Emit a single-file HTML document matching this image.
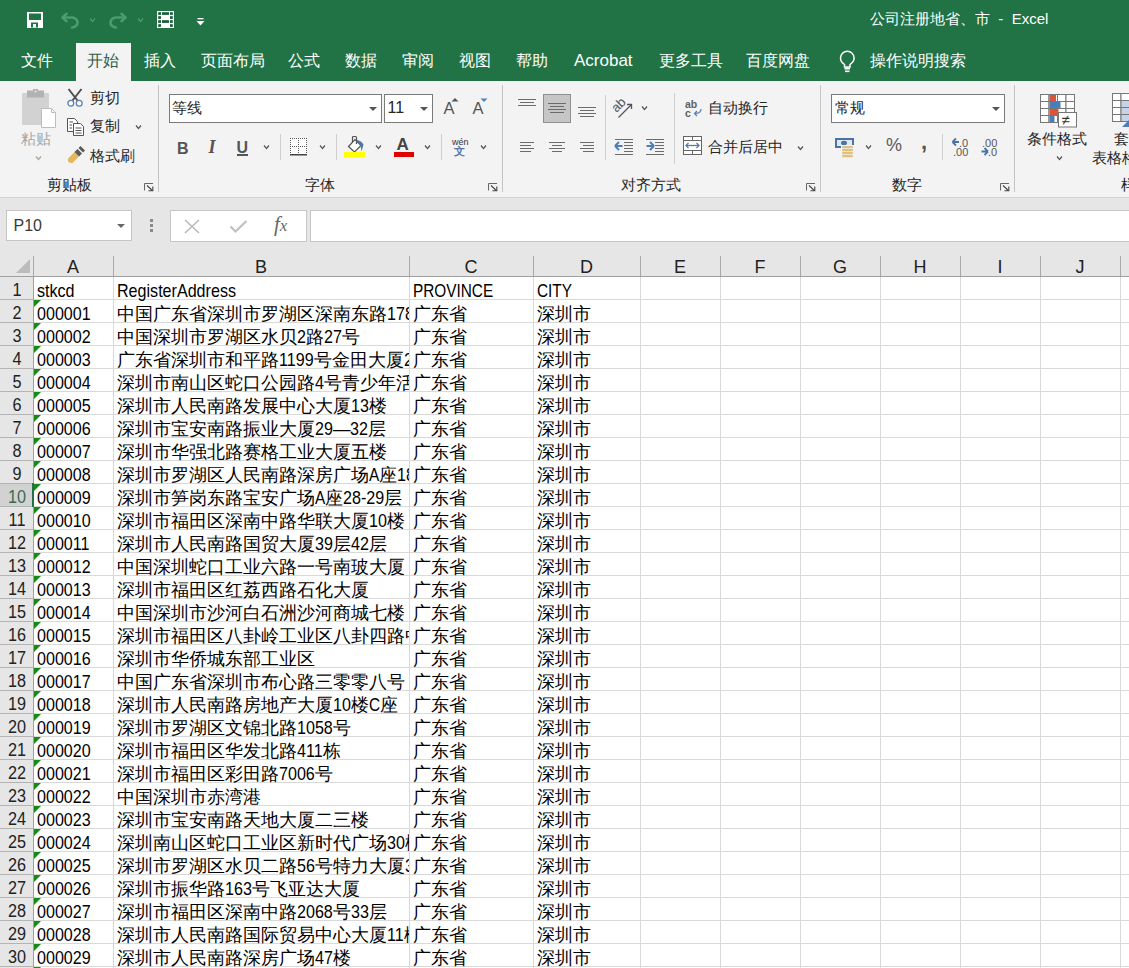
<!DOCTYPE html><html><head><meta charset="utf-8"><style>
html,body{margin:0;padding:0}
body{width:1129px;height:968px;overflow:hidden;position:relative;background:#fff;font-family:'Liberation Sans', sans-serif}
</style></head><body>
<div style="position:absolute;left:0px;top:0px;width:1129px;height:81px;background:#217346"></div>
<div style="position:absolute;left:76px;top:43px;width:55px;height:38px;background:#f3f3f3"></div>
<div style="position:absolute;left:870px;top:8.3px;height:21px;line-height:21px;font-size:15px;color:#ffffff;white-space:nowrap;">公司注册地省、市&nbsp; -&nbsp; Excel</div>
<div style="position:absolute;left:20.7px;top:50.1px;height:21px;line-height:21px;font-size:15.5px;color:#ffffff;white-space:nowrap;">文件</div>
<div style="position:absolute;left:86.7px;top:50.1px;height:21px;line-height:21px;font-size:15.5px;color:#30604a;white-space:nowrap;">开始</div>
<div style="position:absolute;left:143.7px;top:50.1px;height:21px;line-height:21px;font-size:15.5px;color:#ffffff;white-space:nowrap;">插入</div>
<div style="position:absolute;left:200.7px;top:50.1px;height:21px;line-height:21px;font-size:15.5px;color:#ffffff;white-space:nowrap;">页面布局</div>
<div style="position:absolute;left:287.7px;top:50.1px;height:21px;line-height:21px;font-size:15.5px;color:#ffffff;white-space:nowrap;">公式</div>
<div style="position:absolute;left:344.7px;top:50.1px;height:21px;line-height:21px;font-size:15.5px;color:#ffffff;white-space:nowrap;">数据</div>
<div style="position:absolute;left:401.7px;top:50.1px;height:21px;line-height:21px;font-size:15.5px;color:#ffffff;white-space:nowrap;">审阅</div>
<div style="position:absolute;left:458.7px;top:50.1px;height:21px;line-height:21px;font-size:15.5px;color:#ffffff;white-space:nowrap;">视图</div>
<div style="position:absolute;left:515.7px;top:50.1px;height:21px;line-height:21px;font-size:15.5px;color:#ffffff;white-space:nowrap;">帮助</div>
<div style="position:absolute;left:574px;top:48.6px;height:23px;line-height:23px;font-size:17px;color:#ffffff;white-space:nowrap;">Acrobat</div>
<div style="position:absolute;left:658.7px;top:50.1px;height:21px;line-height:21px;font-size:15.5px;color:#ffffff;white-space:nowrap;">更多工具</div>
<div style="position:absolute;left:745.7px;top:50.1px;height:21px;line-height:21px;font-size:15.5px;color:#ffffff;white-space:nowrap;">百度网盘</div>
<div style="position:absolute;left:869.7px;top:50.1px;height:21px;line-height:21px;font-size:15.5px;color:#ffffff;white-space:nowrap;">操作说明搜索</div>
<svg style="position:absolute;left:26px;top:11px;" width="18" height="18" viewBox="0 0 18 18"><rect x="1" y="1" width="16" height="16" fill="#fff"/><rect x="3" y="2.5" width="12" height="6.5" fill="#217346"/><rect x="5" y="11.5" width="7" height="5" fill="#217346"/><rect x="7" y="13" width="3" height="3.5" fill="#fff"/></svg>
<svg style="position:absolute;left:58px;top:10px;" width="24" height="20" viewBox="0 0 24 20"><path d="M5,7.5 H13 A6,5 0 0 1 14,17.5" fill="none" stroke="#4c9a6d" stroke-width="2.6" stroke-linecap="round"/><polyline points="8.5,3.8 4.5,7.5 8.5,11.2" fill="none" stroke="#4c9a6d" stroke-width="2.6" stroke-linecap="round" stroke-linejoin="round"/></svg>
<svg style="position:absolute;left:88.5px;top:16.5px;" width="7" height="6" viewBox="0 0 7 6"><polyline points="1,1.5 3.5,4.5 6,1.5" fill="none" stroke="#4f9a70" stroke-width="1.2"/></svg>
<svg style="position:absolute;left:106px;top:10px;" width="24" height="20" viewBox="0 0 24 20"><path d="M19,7.5 H11 A6,5 0 0 0 10,17.5" fill="none" stroke="#4c9a6d" stroke-width="2.6" stroke-linecap="round"/><polyline points="15.5,3.8 19.5,7.5 15.5,11.2" fill="none" stroke="#4c9a6d" stroke-width="2.6" stroke-linecap="round" stroke-linejoin="round"/></svg>
<svg style="position:absolute;left:136.5px;top:16.5px;" width="7" height="6" viewBox="0 0 7 6"><polyline points="1,1.5 3.5,4.5 6,1.5" fill="none" stroke="#4f9a70" stroke-width="1.2"/></svg>
<svg style="position:absolute;left:157px;top:11px;" width="17" height="17" viewBox="0 0 17 17"><rect x="0" y="0" width="17" height="17" fill="#fff"/><rect x="1.2" y="1.2" width="2.8" height="2.7" fill="#1c5b38"/><rect x="13" y="1.2" width="2.8" height="2.7" fill="#1c5b38"/><rect x="1.2" y="5.2" width="2.8" height="2.7" fill="#1c5b38"/><rect x="13" y="5.2" width="2.8" height="2.7" fill="#1c5b38"/><rect x="1.2" y="9.2" width="2.8" height="2.7" fill="#1c5b38"/><rect x="13" y="9.2" width="2.8" height="2.7" fill="#1c5b38"/><rect x="1.2" y="13.2" width="2.8" height="2.7" fill="#1c5b38"/><rect x="13" y="13.2" width="2.8" height="2.7" fill="#1c5b38"/><rect x="5" y="1.2" width="7" height="2.7" fill="#1c5b38"/><rect x="5" y="9.2" width="7" height="2.7" fill="#1c5b38"/></svg>
<svg style="position:absolute;left:196px;top:17px;" width="9" height="10" viewBox="0 0 9 10"><rect x="1.5" y="1" width="6" height="1.3" fill="#fff"/><polygon points="0.5,4 8.5,4 4.5,8.5" fill="#fff"/></svg>
<svg style="position:absolute;left:838px;top:50px;" width="19" height="24" viewBox="0 0 19 24"><path d="M6.5,17 V14.5 C3.5,12.5 2.5,10.5 2.5,8 A6.8,6.8 0 0 1 16.1,8 C16.1,10.5 15,12.5 12,14.5 V17 Z" fill="none" stroke="#fff" stroke-width="1.5"/><rect x="6.5" y="17.5" width="5.5" height="2" fill="#fff"/><rect x="7" y="20.5" width="4.5" height="1.6" fill="#fff"/></svg>
<div style="position:absolute;left:0px;top:81px;width:1129px;height:116px;background:#f3f3f3"></div>
<div style="position:absolute;left:0px;top:197px;width:1129px;height:1px;background:#d4d4d4"></div>
<div style="position:absolute;left:158px;top:85px;width:1px;height:107px;background:#c4c4c4"></div>
<div style="position:absolute;left:502px;top:85px;width:1px;height:107px;background:#c4c4c4"></div>
<div style="position:absolute;left:820px;top:85px;width:1px;height:107px;background:#c4c4c4"></div>
<div style="position:absolute;left:1014px;top:85px;width:1px;height:107px;background:#c4c4c4"></div>
<svg style="position:absolute;left:20px;top:88px;" width="40" height="42" viewBox="0 0 40 42"><rect x="2" y="5" width="27" height="32" rx="1" fill="#d2d2d2"/><rect x="7" y="2.5" width="17" height="7" fill="#b2b2b2"/><rect x="13" y="1" width="5" height="4" fill="#b2b2b2"/><rect x="14.5" y="2.5" width="2" height="2" fill="#e0e0e0"/><path d="M21.5,20.5 H31.5 L35.5,24.5 V39.5 H21.5 Z" fill="#ffffff" stroke="#bdbdbd" stroke-width="1"/><path d="M31.5,20.5 V24.5 H35.5" fill="none" stroke="#bdbdbd" stroke-width="1"/></svg>
<div style="position:absolute;left:20.5px;top:127.8px;height:21px;line-height:21px;font-size:15px;color:#a6a6a6;white-space:nowrap;">粘贴</div>
<svg style="position:absolute;left:34.5px;top:155px;" width="7" height="6" viewBox="0 0 7 6"><polyline points="1,1.5 3.5,4.5 6,1.5" fill="none" stroke="#a6a6a6" stroke-width="1.2"/></svg>
<svg style="position:absolute;left:66px;top:88px;" width="19" height="20" viewBox="0 0 19 20"><path d="M2.5,1 L11.5,12.5 M15.5,1 L6.5,12.5" fill="none" stroke="#505050" stroke-width="2"/><circle cx="4.8" cy="15.3" r="2.9" fill="#fff" stroke="#5b7fa8" stroke-width="1.3"/><circle cx="13.2" cy="15.3" r="2.9" fill="#fff" stroke="#5b7fa8" stroke-width="1.3"/></svg>
<div style="position:absolute;left:90px;top:87.3px;height:21px;line-height:21px;font-size:15px;color:#262626;white-space:nowrap;">剪切</div>
<svg style="position:absolute;left:66px;top:117px;" width="20" height="20" viewBox="0 0 20 20"><path d="M1.5,1.5 H8.5 L11.5,4.5 V14.5 H1.5 Z" fill="#fff" stroke="#555" stroke-width="1"/><path d="M7.5,6.5 H14.5 L17.5,9.5 V18.5 H7.5 Z" fill="#fff" stroke="#555" stroke-width="1"/><line x1="3.5" y1="5" x2="7" y2="5" stroke="#555"/><line x1="3.5" y1="8" x2="6" y2="8" stroke="#555"/><line x1="3.5" y1="11" x2="6" y2="11" stroke="#555"/><line x1="9.5" y1="11" x2="15.5" y2="11" stroke="#555"/><line x1="9.5" y1="13.5" x2="15.5" y2="13.5" stroke="#555"/><line x1="9.5" y1="16" x2="15.5" y2="16" stroke="#555"/></svg>
<div style="position:absolute;left:90px;top:115.3px;height:21px;line-height:21px;font-size:15px;color:#262626;white-space:nowrap;">复制</div>
<svg style="position:absolute;left:134.5px;top:124px;" width="7" height="6" viewBox="0 0 7 6"><polyline points="1,1.5 3.5,4.5 6,1.5" fill="none" stroke="#555" stroke-width="1.2"/></svg>
<svg style="position:absolute;left:66px;top:146px;" width="20" height="20" viewBox="0 0 20 20"><path d="M2,12.5 L8.5,6 L13,10.5 L6.5,17 Q4,17.5 2,15.5 Z" fill="#e2b961"/><path d="M8.5,6 L11.5,3 L16,7.5 L13,10.5 Z" fill="#5a5a5a"/><path d="M12.5,2 L14.5,0 L19,4.5 L17,6.5 Z" fill="#5a5a5a"/></svg>
<div style="position:absolute;left:90px;top:144.8px;height:21px;line-height:21px;font-size:15px;color:#262626;white-space:nowrap;">格式刷</div>
<div style="position:absolute;left:47px;top:174.3px;height:21px;line-height:21px;font-size:15px;color:#262626;white-space:nowrap;">剪贴板</div>
<svg style="position:absolute;left:144px;top:183px;" width="10" height="9" viewBox="0 0 10 9"><polyline points="0.5,7.5 0.5,0.5 9,0.5" fill="none" stroke="#666" stroke-width="1"/><line x1="3" y1="2.5" x2="8.3" y2="7.5" stroke="#444" stroke-width="1.1"/><polyline points="4.5,7.8 8.8,7.8 8.8,3.5" fill="none" stroke="#444" stroke-width="1.1"/></svg>
<div style="position:absolute;left:169px;top:94px;width:213px;height:29px;background:#fff;border:1px solid #7a7a7a;box-sizing:border-box"></div>
<div style="position:absolute;left:172px;top:96.8px;height:21px;line-height:21px;font-size:15px;color:#262626;white-space:nowrap;">等线</div>
<svg style="position:absolute;left:368px;top:105.5px;" width="10" height="6" viewBox="0 0 10 6"><polygon points="1,1 9,1 5,5" fill="#555"/></svg>
<div style="position:absolute;left:384px;top:94px;width:49px;height:29px;background:#fff;border:1px solid #7a7a7a;box-sizing:border-box"></div>
<div style="position:absolute;left:387.5px;top:96.8px;height:22px;line-height:22px;font-size:16px;color:#262626;white-space:nowrap;">11</div>
<svg style="position:absolute;left:419px;top:105.5px;" width="10" height="6" viewBox="0 0 10 6"><polygon points="1,1 9,1 5,5" fill="#555"/></svg>
<div style="position:absolute;left:443.5px;top:96.8px;height:23px;line-height:23px;font-size:16.5px;color:#555;white-space:nowrap;">A</div>
<svg style="position:absolute;left:451px;top:97px;" width="8" height="5" viewBox="0 0 8 5"><polygon points="0.5,4.5 4,1 7.5,4.5" fill="#555"/></svg>
<div style="position:absolute;left:472.5px;top:96.8px;height:23px;line-height:23px;font-size:16.5px;color:#555;white-space:nowrap;">A</div>
<svg style="position:absolute;left:480px;top:98px;" width="8" height="5" viewBox="0 0 8 5"><polygon points="0.5,0.5 7.5,0.5 4,4" fill="#4a84c4"/></svg>
<div style="position:absolute;left:177px;top:137.8px;height:22px;line-height:22px;font-size:16px;color:#555;white-space:nowrap;font-weight:bold">B</div>
<div style="position:absolute;left:208.5px;top:135.3px;height:25px;line-height:25px;font-size:18px;color:#555;white-space:nowrap;font-weight:bold;font-style:italic;font-family:'Liberation Serif',serif">I</div>
<div style="position:absolute;left:236.5px;top:137.3px;height:22px;line-height:22px;font-size:16px;color:#555;white-space:nowrap;font-weight:bold">U</div>
<div style="position:absolute;left:237px;top:154px;width:11px;height:1.5px;background:#555"></div>
<svg style="position:absolute;left:262.5px;top:144px;" width="7" height="6" viewBox="0 0 7 6"><polyline points="1,1.5 3.5,4.5 6,1.5" fill="none" stroke="#555" stroke-width="1.2"/></svg>
<div style="position:absolute;left:280px;top:134px;width:1px;height:26px;background:#cfcfcf"></div>
<svg style="position:absolute;left:289px;top:137px;" width="19" height="19" viewBox="0 0 19 19"><rect x="1" y="1" width="17" height="16" fill="#fff"/><rect x="1" y="1" width="1" height="1" fill="#555"/><rect x="9" y="1" width="1" height="1" fill="#555"/><rect x="17" y="1" width="1" height="1" fill="#555"/><rect x="1" y="3" width="1" height="1" fill="#555"/><rect x="9" y="3" width="1" height="1" fill="#555"/><rect x="17" y="3" width="1" height="1" fill="#555"/><rect x="1" y="5" width="1" height="1" fill="#555"/><rect x="9" y="5" width="1" height="1" fill="#555"/><rect x="17" y="5" width="1" height="1" fill="#555"/><rect x="1" y="7" width="1" height="1" fill="#555"/><rect x="9" y="7" width="1" height="1" fill="#555"/><rect x="17" y="7" width="1" height="1" fill="#555"/><rect x="1" y="9" width="1" height="1" fill="#555"/><rect x="9" y="9" width="1" height="1" fill="#555"/><rect x="17" y="9" width="1" height="1" fill="#555"/><rect x="1" y="11" width="1" height="1" fill="#555"/><rect x="9" y="11" width="1" height="1" fill="#555"/><rect x="17" y="11" width="1" height="1" fill="#555"/><rect x="1" y="13" width="1" height="1" fill="#555"/><rect x="9" y="13" width="1" height="1" fill="#555"/><rect x="17" y="13" width="1" height="1" fill="#555"/><rect x="1" y="15" width="1" height="1" fill="#555"/><rect x="9" y="15" width="1" height="1" fill="#555"/><rect x="17" y="15" width="1" height="1" fill="#555"/><rect x="1" y="1" width="1" height="1" fill="#555"/><rect x="1" y="9" width="1" height="1" fill="#555"/><rect x="3" y="1" width="1" height="1" fill="#555"/><rect x="3" y="9" width="1" height="1" fill="#555"/><rect x="5" y="1" width="1" height="1" fill="#555"/><rect x="5" y="9" width="1" height="1" fill="#555"/><rect x="7" y="1" width="1" height="1" fill="#555"/><rect x="7" y="9" width="1" height="1" fill="#555"/><rect x="9" y="1" width="1" height="1" fill="#555"/><rect x="9" y="9" width="1" height="1" fill="#555"/><rect x="11" y="1" width="1" height="1" fill="#555"/><rect x="11" y="9" width="1" height="1" fill="#555"/><rect x="13" y="1" width="1" height="1" fill="#555"/><rect x="13" y="9" width="1" height="1" fill="#555"/><rect x="15" y="1" width="1" height="1" fill="#555"/><rect x="15" y="9" width="1" height="1" fill="#555"/><rect x="17" y="1" width="1" height="1" fill="#555"/><rect x="17" y="9" width="1" height="1" fill="#555"/><rect x="1" y="17" width="17" height="1.5" fill="#444"/></svg>
<svg style="position:absolute;left:318.5px;top:144px;" width="7" height="6" viewBox="0 0 7 6"><polyline points="1,1.5 3.5,4.5 6,1.5" fill="none" stroke="#555" stroke-width="1.2"/></svg>
<div style="position:absolute;left:336px;top:134px;width:1px;height:26px;background:#cfcfcf"></div>
<svg style="position:absolute;left:344px;top:135px;" width="22" height="23" viewBox="0 0 22 23"><path d="M4.5,11.5 L10.5,17 L17,10.5 L11,4.5 Z" fill="#fff" stroke="#555" stroke-width="1.2"/><path d="M8.5,7 V2.5 Q8.5,1.5 9.5,1.5 H11.5 Q12.5,1.5 12.5,2.5 V9" fill="none" stroke="#555" stroke-width="1.2"/><path d="M12,4.5 Q18,6 19.5,9.5 L17.5,16.5 L16.5,10.5 Z" fill="#4f78a6"/><rect x="0" y="17" width="21" height="5.5" fill="#ffff00"/></svg>
<svg style="position:absolute;left:374.5px;top:144px;" width="7" height="6" viewBox="0 0 7 6"><polyline points="1,1.5 3.5,4.5 6,1.5" fill="none" stroke="#555" stroke-width="1.2"/></svg>
<div style="position:absolute;left:396.5px;top:132.8px;height:23px;line-height:23px;font-size:17px;color:#444;white-space:nowrap;font-weight:bold">A</div>
<div style="position:absolute;left:394px;top:152px;width:20px;height:5px;background:#e00000"></div>
<svg style="position:absolute;left:423.5px;top:144px;" width="7" height="6" viewBox="0 0 7 6"><polyline points="1,1.5 3.5,4.5 6,1.5" fill="none" stroke="#555" stroke-width="1.2"/></svg>
<div style="position:absolute;left:441px;top:134px;width:1px;height:26px;background:#cfcfcf"></div>
<div style="position:absolute;left:452px;top:137.3px;height:10px;line-height:10px;font-size:9px;color:#333;white-space:nowrap;">wén</div>
<div style="position:absolute;left:453.5px;top:145.3px;height:12px;line-height:12px;font-size:11px;color:#4f78a6;white-space:nowrap;font-weight:bold">文</div>
<svg style="position:absolute;left:479.5px;top:144px;" width="7" height="6" viewBox="0 0 7 6"><polyline points="1,1.5 3.5,4.5 6,1.5" fill="none" stroke="#555" stroke-width="1.2"/></svg>
<div style="position:absolute;left:305px;top:174.3px;height:21px;line-height:21px;font-size:15px;color:#262626;white-space:nowrap;">字体</div>
<svg style="position:absolute;left:488px;top:183px;" width="10" height="9" viewBox="0 0 10 9"><polyline points="0.5,7.5 0.5,0.5 9,0.5" fill="none" stroke="#666" stroke-width="1"/><line x1="3" y1="2.5" x2="8.3" y2="7.5" stroke="#444" stroke-width="1.1"/><polyline points="4.5,7.8 8.8,7.8 8.8,3.5" fill="none" stroke="#444" stroke-width="1.1"/></svg>
<svg style="position:absolute;left:500px;top:90px;" width="170" height="80" viewBox="0 0 170 80"></svg>
<div style="position:absolute;left:518px;top:99px;width:18px;height:1px;background:#6b6b6b"></div>
<div style="position:absolute;left:520px;top:102px;width:14px;height:1px;background:#6b6b6b"></div>
<div style="position:absolute;left:518px;top:105px;width:18px;height:1px;background:#6b6b6b"></div>
<div style="position:absolute;left:543px;top:94px;width:28px;height:29px;background:#c6c6c6;border:1px solid #8f8f8f;box-sizing:border-box"></div>
<div style="position:absolute;left:548px;top:103px;width:18px;height:1px;background:#6b6b6b"></div>
<div style="position:absolute;left:550px;top:106px;width:14px;height:1px;background:#6b6b6b"></div>
<div style="position:absolute;left:548px;top:109px;width:18px;height:1px;background:#6b6b6b"></div>
<div style="position:absolute;left:550px;top:112px;width:14px;height:1px;background:#6b6b6b"></div>
<div style="position:absolute;left:578px;top:107px;width:18px;height:1px;background:#6b6b6b"></div>
<div style="position:absolute;left:580px;top:110px;width:14px;height:1px;background:#6b6b6b"></div>
<div style="position:absolute;left:578px;top:113px;width:18px;height:1px;background:#6b6b6b"></div>
<div style="position:absolute;left:580px;top:116px;width:14px;height:1px;background:#6b6b6b"></div>
<div style="position:absolute;left:520px;top:142px;width:14px;height:1px;background:#6b6b6b"></div>
<div style="position:absolute;left:549px;top:142px;width:16px;height:1px;background:#6b6b6b"></div>
<div style="position:absolute;left:580px;top:142px;width:14px;height:1px;background:#6b6b6b"></div>
<div style="position:absolute;left:520px;top:145px;width:11px;height:1px;background:#6b6b6b"></div>
<div style="position:absolute;left:552px;top:145px;width:10px;height:1px;background:#6b6b6b"></div>
<div style="position:absolute;left:583px;top:145px;width:11px;height:1px;background:#6b6b6b"></div>
<div style="position:absolute;left:520px;top:148px;width:14px;height:1px;background:#6b6b6b"></div>
<div style="position:absolute;left:549px;top:148px;width:16px;height:1px;background:#6b6b6b"></div>
<div style="position:absolute;left:580px;top:148px;width:14px;height:1px;background:#6b6b6b"></div>
<div style="position:absolute;left:520px;top:151px;width:11px;height:1px;background:#6b6b6b"></div>
<div style="position:absolute;left:552px;top:151px;width:10px;height:1px;background:#6b6b6b"></div>
<div style="position:absolute;left:583px;top:151px;width:11px;height:1px;background:#6b6b6b"></div>
<div style="position:absolute;left:605px;top:95px;width:1px;height:65px;background:#d0d0d0"></div>
<svg style="position:absolute;left:613px;top:97px;" width="22" height="22" viewBox="0 0 22 22"><text x="0" y="0" font-size="13" fill="#555" font-family="Liberation Sans" transform="translate(3.5,16) rotate(-45)">ab</text><line x1="5.5" y1="20.5" x2="18.5" y2="7.5" stroke="#555" stroke-width="1.3"/><polyline points="14,7.5 18.5,7.5 18.5,12" fill="none" stroke="#555" stroke-width="1.3"/></svg>
<svg style="position:absolute;left:640.5px;top:105px;" width="7" height="6" viewBox="0 0 7 6"><polyline points="1,1.5 3.5,4.5 6,1.5" fill="none" stroke="#555" stroke-width="1.2"/></svg>
<div style="position:absolute;left:615px;top:139px;width:18px;height:1px;background:#6b6b6b"></div>
<div style="position:absolute;left:624px;top:142px;width:9px;height:1px;background:#6b6b6b"></div>
<div style="position:absolute;left:624px;top:145px;width:9px;height:1px;background:#6b6b6b"></div>
<div style="position:absolute;left:624px;top:148px;width:9px;height:1px;background:#6b6b6b"></div>
<div style="position:absolute;left:624px;top:151px;width:9px;height:1px;background:#6b6b6b"></div>
<div style="position:absolute;left:615px;top:154px;width:18px;height:1px;background:#6b6b6b"></div>
<svg style="position:absolute;left:614px;top:140px;" width="10" height="12" viewBox="0 0 10 12"><path d="M1,6 L5,2 M1,6 L5,10 M1.5,6 H8.5" fill="none" stroke="#4a7ebb" stroke-width="2"/></svg>
<div style="position:absolute;left:646px;top:139px;width:18px;height:1px;background:#6b6b6b"></div>
<div style="position:absolute;left:655px;top:142px;width:9px;height:1px;background:#6b6b6b"></div>
<div style="position:absolute;left:655px;top:145px;width:9px;height:1px;background:#6b6b6b"></div>
<div style="position:absolute;left:655px;top:148px;width:9px;height:1px;background:#6b6b6b"></div>
<div style="position:absolute;left:655px;top:151px;width:9px;height:1px;background:#6b6b6b"></div>
<div style="position:absolute;left:646px;top:154px;width:18px;height:1px;background:#6b6b6b"></div>
<svg style="position:absolute;left:645px;top:140px;" width="10" height="12" viewBox="0 0 10 12"><path d="M9,6 L5,2 M9,6 L5,10 M1.5,6 H8.5" fill="none" stroke="#4a7ebb" stroke-width="2"/></svg>
<div style="position:absolute;left:674px;top:93px;width:1px;height:71px;background:#d0d0d0"></div>
<svg style="position:absolute;left:684px;top:99px;" width="19" height="19" viewBox="0 0 19 19"><text x="1" y="8.5" font-size="10.5" font-weight="bold" fill="#606060" font-family="Liberation Sans">ab</text><text x="1" y="17.5" font-size="10.5" font-weight="bold" fill="#606060" font-family="Liberation Sans">c</text><path d="M17,10 Q17,14.5 11,14.5" fill="none" stroke="#5a84b8" stroke-width="1.3"/><polyline points="13,12 10.5,14.5 13,17" fill="none" stroke="#5a84b8" stroke-width="1.3"/></svg>
<div style="position:absolute;left:708px;top:96.8px;height:21px;line-height:21px;font-size:15px;color:#262626;white-space:nowrap;">自动换行</div>
<svg style="position:absolute;left:683px;top:136px;" width="20" height="20" viewBox="0 0 20 20"><rect x="0.5" y="0.5" width="18" height="18" fill="#fff" stroke="#666" stroke-width="1"/><line x1="0.5" y1="4.5" x2="18.5" y2="4.5" stroke="#666"/><line x1="0.5" y1="14.5" x2="18.5" y2="14.5" stroke="#666"/><line x1="9.5" y1="0.5" x2="9.5" y2="4.5" stroke="#666"/><line x1="9.5" y1="14.5" x2="9.5" y2="18.5" stroke="#666"/><line x1="3" y1="9.5" x2="16" y2="9.5" stroke="#5a7aa8" stroke-width="1.3"/><polyline points="5.5,7 3,9.5 5.5,12" fill="none" stroke="#5a7aa8" stroke-width="1.3"/><polyline points="13.5,7 16,9.5 13.5,12" fill="none" stroke="#5a7aa8" stroke-width="1.3"/></svg>
<div style="position:absolute;left:708px;top:136.3px;height:21px;line-height:21px;font-size:15px;color:#262626;white-space:nowrap;">合并后居中</div>
<svg style="position:absolute;left:796.5px;top:144.5px;" width="7" height="6" viewBox="0 0 7 6"><polyline points="1,1.5 3.5,4.5 6,1.5" fill="none" stroke="#555" stroke-width="1.2"/></svg>
<div style="position:absolute;left:621px;top:174.3px;height:21px;line-height:21px;font-size:15px;color:#262626;white-space:nowrap;">对齐方式</div>
<svg style="position:absolute;left:806px;top:183px;" width="10" height="9" viewBox="0 0 10 9"><polyline points="0.5,7.5 0.5,0.5 9,0.5" fill="none" stroke="#666" stroke-width="1"/><line x1="3" y1="2.5" x2="8.3" y2="7.5" stroke="#444" stroke-width="1.1"/><polyline points="4.5,7.8 8.8,7.8 8.8,3.5" fill="none" stroke="#444" stroke-width="1.1"/></svg>
<div style="position:absolute;left:831px;top:94px;width:174px;height:29px;background:#fff;border:1px solid #7a7a7a;box-sizing:border-box"></div>
<div style="position:absolute;left:835px;top:96.8px;height:21px;line-height:21px;font-size:15px;color:#262626;white-space:nowrap;">常规</div>
<svg style="position:absolute;left:991px;top:105.5px;" width="10" height="6" viewBox="0 0 10 6"><polygon points="1,1 9,1 5,5" fill="#555"/></svg>
<svg style="position:absolute;left:834px;top:137px;" width="22" height="21" viewBox="0 0 22 21"><rect x="1" y="1" width="19" height="10" fill="#4a74a8"/><rect x="3" y="3" width="15" height="6" fill="#dfe8f3"/><ellipse cx="10" cy="6" rx="3" ry="2.2" fill="#4a74a8"/><rect x="7" y="8" width="13" height="12.5" fill="#f3f3f3"/><rect x="8" y="9" width="11" height="2.3" rx="1" fill="#e3c07a"/><rect x="8" y="12" width="11" height="2.3" rx="1" fill="#e3c07a"/><rect x="8" y="15" width="11" height="2.3" rx="1" fill="#e3c07a"/><rect x="8" y="18" width="11" height="2.3" rx="1" fill="#e3c07a"/></svg>
<svg style="position:absolute;left:864.5px;top:144px;" width="7" height="6" viewBox="0 0 7 6"><polyline points="1,1.5 3.5,4.5 6,1.5" fill="none" stroke="#555" stroke-width="1.2"/></svg>
<div style="position:absolute;left:886px;top:133.3px;height:25px;line-height:25px;font-size:18px;color:#5a5a5a;white-space:nowrap;">%</div>
<div style="position:absolute;left:921px;top:126.8px;height:30px;line-height:30px;font-size:22px;color:#555;white-space:nowrap;"><b>,</b></div>
<div style="position:absolute;left:942px;top:134px;width:1px;height:26px;background:#d0d0d0"></div>
<svg style="position:absolute;left:951px;top:137px;" width="20" height="20" viewBox="0 0 20 20"><path d="M1.5,5 L5,1.5 M1.5,5 L5,8.5 M2,5 H8" fill="none" stroke="#4a74a8" stroke-width="1.8"/><text x="8" y="9.5" font-size="11" fill="#555" font-family="Liberation Sans">.0</text><text x="2" y="19" font-size="11" fill="#555" font-family="Liberation Sans">.00</text></svg>
<svg style="position:absolute;left:980px;top:137px;" width="20" height="20" viewBox="0 0 20 20"><text x="2" y="9.5" font-size="11" fill="#555" font-family="Liberation Sans">.00</text><path d="M8,14.5 L4.5,11 M8,14.5 L4.5,18 M1.5,14.5 H7.5" fill="none" stroke="#4a74a8" stroke-width="1.8"/><text x="8" y="19" font-size="11" fill="#555" font-family="Liberation Sans">.0</text></svg>
<div style="position:absolute;left:892px;top:173.8px;height:21px;line-height:21px;font-size:15px;color:#262626;white-space:nowrap;">数字</div>
<svg style="position:absolute;left:1000px;top:183px;" width="10" height="9" viewBox="0 0 10 9"><polyline points="0.5,7.5 0.5,0.5 9,0.5" fill="none" stroke="#666" stroke-width="1"/><line x1="3" y1="2.5" x2="8.3" y2="7.5" stroke="#444" stroke-width="1.1"/><polyline points="4.5,7.8 8.8,7.8 8.8,3.5" fill="none" stroke="#444" stroke-width="1.1"/></svg>
<svg style="position:absolute;left:1040px;top:94px;" width="38" height="34" viewBox="0 0 38 34"><rect x="0.5" y="0.5" width="8.5" height="7" fill="#fff" stroke="#777" stroke-width="1"/><rect x="9.0" y="0.5" width="8.5" height="7" fill="#fff" stroke="#777" stroke-width="1"/><rect x="17.5" y="0.5" width="8.5" height="7" fill="#fff" stroke="#777" stroke-width="1"/><rect x="26.0" y="0.5" width="8.5" height="7" fill="#fff" stroke="#777" stroke-width="1"/><rect x="0.5" y="7.5" width="8.5" height="7" fill="#fff" stroke="#777" stroke-width="1"/><rect x="9.0" y="7.5" width="8.5" height="7" fill="#fff" stroke="#777" stroke-width="1"/><rect x="17.5" y="7.5" width="8.5" height="7" fill="#fff" stroke="#777" stroke-width="1"/><rect x="26.0" y="7.5" width="8.5" height="7" fill="#fff" stroke="#777" stroke-width="1"/><rect x="0.5" y="14.5" width="8.5" height="7" fill="#fff" stroke="#777" stroke-width="1"/><rect x="9.0" y="14.5" width="8.5" height="7" fill="#fff" stroke="#777" stroke-width="1"/><rect x="17.5" y="14.5" width="8.5" height="7" fill="#fff" stroke="#777" stroke-width="1"/><rect x="26.0" y="14.5" width="8.5" height="7" fill="#fff" stroke="#777" stroke-width="1"/><rect x="0.5" y="21.5" width="8.5" height="7" fill="#fff" stroke="#777" stroke-width="1"/><rect x="9.0" y="21.5" width="8.5" height="7" fill="#fff" stroke="#777" stroke-width="1"/><rect x="17.5" y="21.5" width="8.5" height="7" fill="#fff" stroke="#777" stroke-width="1"/><rect x="26.0" y="21.5" width="8.5" height="7" fill="#fff" stroke="#777" stroke-width="1"/><rect x="9.5" y="1" width="6.5" height="6" fill="#d8553a"/><rect x="9.5" y="8" width="11" height="6" fill="#4a7ebb"/><rect x="9.5" y="15" width="9" height="6" fill="#d8553a"/><rect x="9.5" y="22" width="5" height="6" fill="#4a7ebb"/><rect x="18.5" y="18.5" width="18" height="14.5" fill="#fff" stroke="#777" stroke-width="1"/><text x="21.5" y="31" font-size="15" fill="#333" font-family="Liberation Sans">≠</text></svg>
<div style="position:absolute;left:1027px;top:127.8px;height:21px;line-height:21px;font-size:15px;color:#262626;white-space:nowrap;">条件格式</div>
<svg style="position:absolute;left:1055.5px;top:155px;" width="7" height="6" viewBox="0 0 7 6"><polyline points="1,1.5 3.5,4.5 6,1.5" fill="none" stroke="#555" stroke-width="1.2"/></svg>
<svg style="position:absolute;left:1112px;top:93px;" width="20" height="37" viewBox="0 0 20 37"><rect x="0.5" y="0.5" width="8.5" height="7" fill="#fff" stroke="#777" stroke-width="1"/><rect x="9.0" y="0.5" width="8.5" height="7" fill="#fff" stroke="#777" stroke-width="1"/><rect x="17.5" y="0.5" width="8.5" height="7" fill="#fff" stroke="#777" stroke-width="1"/><rect x="0.5" y="7.5" width="8.5" height="7" fill="#fff" stroke="#777" stroke-width="1"/><rect x="9.0" y="7.5" width="8.5" height="7" fill="#c5d3e8" stroke="#777" stroke-width="1"/><rect x="17.5" y="7.5" width="8.5" height="7" fill="#c5d3e8" stroke="#777" stroke-width="1"/><rect x="0.5" y="14.5" width="8.5" height="7" fill="#fff" stroke="#777" stroke-width="1"/><rect x="9.0" y="14.5" width="8.5" height="7" fill="#c5d3e8" stroke="#777" stroke-width="1"/><rect x="17.5" y="14.5" width="8.5" height="7" fill="#c5d3e8" stroke="#777" stroke-width="1"/><rect x="0.5" y="21.5" width="8.5" height="7" fill="#fff" stroke="#777" stroke-width="1"/><rect x="9.0" y="21.5" width="8.5" height="7" fill="#c5d3e8" stroke="#777" stroke-width="1"/><rect x="17.5" y="21.5" width="8.5" height="7" fill="#c5d3e8" stroke="#777" stroke-width="1"/><polygon points="10,34 20,24 20,34" fill="#4a7ebb"/></svg>
<div style="position:absolute;left:1114px;top:127.8px;height:21px;line-height:21px;font-size:15px;color:#262626;white-space:nowrap;">套</div>
<div style="position:absolute;left:1092px;top:146.8px;height:21px;line-height:21px;font-size:15px;color:#262626;white-space:nowrap;">表格格式</div>
<div style="position:absolute;left:1121px;top:174.3px;height:21px;line-height:21px;font-size:15px;color:#262626;white-space:nowrap;">样式</div>
<div style="position:absolute;left:0px;top:198px;width:1129px;height:58px;background:#e6e6e6"></div>
<div style="position:absolute;left:6px;top:210px;width:126px;height:31px;background:#fff;border:1px solid #c6c6c6;box-sizing:border-box"></div>
<div style="position:absolute;left:13.5px;top:214.8px;height:22px;line-height:22px;font-size:16px;color:#3a3a3a;white-space:nowrap;">P10</div>
<svg style="position:absolute;left:116px;top:223px;" width="10" height="6" viewBox="0 0 10 6"><polygon points="1,1 9,1 5,5" fill="#666"/></svg>
<div style="position:absolute;left:150px;top:219px;width:2.5px;height:3px;background:#8a8a8a"></div>
<div style="position:absolute;left:150px;top:224px;width:2.5px;height:3px;background:#8a8a8a"></div>
<div style="position:absolute;left:150px;top:229px;width:2.5px;height:3px;background:#8a8a8a"></div>
<div style="position:absolute;left:170px;top:210px;width:137px;height:32px;background:#fff;border:1px solid #c6c6c6;box-sizing:border-box"></div>
<div style="position:absolute;left:310px;top:210px;width:830px;height:32px;background:#fff;border:1px solid #c6c6c6;box-sizing:border-box"></div>
<svg style="position:absolute;left:184px;top:219px;" width="16" height="15" viewBox="0 0 16 15"><line x1="1" y1="1" x2="15" y2="14" stroke="#b8b8b8" stroke-width="1.5"/><line x1="15" y1="1" x2="1" y2="14" stroke="#b8b8b8" stroke-width="1.5"/></svg>
<svg style="position:absolute;left:229px;top:219px;" width="19" height="15" viewBox="0 0 19 15"><polyline points="1.5,7.5 6.5,12.5 17.5,2" fill="none" stroke="#c0c0c0" stroke-width="2.3"/></svg>
<div style="position:absolute;left:274px;top:209.8px;height:29px;line-height:29px;font-size:21px;color:#666;white-space:nowrap;font-family:'Liberation Serif',serif"><i>f</i><i style=font-size:17px>x</i></div>
<div style="position:absolute;left:0px;top:256px;width:1129px;height:20px;background:#e6e6e6"></div>
<div style="position:absolute;left:0px;top:276px;width:1129px;height:1px;background:#a0a0a0"></div>
<div style="position:absolute;left:0px;top:277px;width:33px;height:691px;background:#e6e6e6"></div>
<div style="position:absolute;left:33px;top:256px;width:1px;height:20px;background:#a9a9a9"></div>
<div style="position:absolute;left:113px;top:256px;width:1px;height:20px;background:#a9a9a9"></div>
<div style="position:absolute;left:409px;top:256px;width:1px;height:20px;background:#a9a9a9"></div>
<div style="position:absolute;left:533px;top:256px;width:1px;height:20px;background:#a9a9a9"></div>
<div style="position:absolute;left:640px;top:256px;width:1px;height:20px;background:#a9a9a9"></div>
<div style="position:absolute;left:720px;top:256px;width:1px;height:20px;background:#a9a9a9"></div>
<div style="position:absolute;left:800px;top:256px;width:1px;height:20px;background:#a9a9a9"></div>
<div style="position:absolute;left:880px;top:256px;width:1px;height:20px;background:#a9a9a9"></div>
<div style="position:absolute;left:960px;top:256px;width:1px;height:20px;background:#a9a9a9"></div>
<div style="position:absolute;left:1040px;top:256px;width:1px;height:20px;background:#a9a9a9"></div>
<div style="position:absolute;left:1120px;top:256px;width:1px;height:20px;background:#a9a9a9"></div>
<div style="position:absolute;left:113px;top:277px;width:1px;height:691px;background:#d9d9d9"></div>
<div style="position:absolute;left:409px;top:277px;width:1px;height:691px;background:#d9d9d9"></div>
<div style="position:absolute;left:533px;top:277px;width:1px;height:691px;background:#d9d9d9"></div>
<div style="position:absolute;left:640px;top:277px;width:1px;height:691px;background:#d9d9d9"></div>
<div style="position:absolute;left:720px;top:277px;width:1px;height:691px;background:#d9d9d9"></div>
<div style="position:absolute;left:800px;top:277px;width:1px;height:691px;background:#d9d9d9"></div>
<div style="position:absolute;left:880px;top:277px;width:1px;height:691px;background:#d9d9d9"></div>
<div style="position:absolute;left:960px;top:277px;width:1px;height:691px;background:#d9d9d9"></div>
<div style="position:absolute;left:1040px;top:277px;width:1px;height:691px;background:#d9d9d9"></div>
<div style="position:absolute;left:1120px;top:277px;width:1px;height:691px;background:#d9d9d9"></div>
<div style="position:absolute;left:33px;top:277px;width:1px;height:691px;background:#a0a0a0"></div>
<div style="position:absolute;left:34px;top:299px;width:1095px;height:1px;background:#d9d9d9"></div>
<div style="position:absolute;left:0px;top:299px;width:33px;height:1px;background:#b4b4b4"></div>
<div style="position:absolute;left:34px;top:322px;width:1095px;height:1px;background:#d9d9d9"></div>
<div style="position:absolute;left:0px;top:322px;width:33px;height:1px;background:#b4b4b4"></div>
<div style="position:absolute;left:34px;top:345px;width:1095px;height:1px;background:#d9d9d9"></div>
<div style="position:absolute;left:0px;top:345px;width:33px;height:1px;background:#b4b4b4"></div>
<div style="position:absolute;left:34px;top:368px;width:1095px;height:1px;background:#d9d9d9"></div>
<div style="position:absolute;left:0px;top:368px;width:33px;height:1px;background:#b4b4b4"></div>
<div style="position:absolute;left:34px;top:391px;width:1095px;height:1px;background:#d9d9d9"></div>
<div style="position:absolute;left:0px;top:391px;width:33px;height:1px;background:#b4b4b4"></div>
<div style="position:absolute;left:34px;top:414px;width:1095px;height:1px;background:#d9d9d9"></div>
<div style="position:absolute;left:0px;top:414px;width:33px;height:1px;background:#b4b4b4"></div>
<div style="position:absolute;left:34px;top:437px;width:1095px;height:1px;background:#d9d9d9"></div>
<div style="position:absolute;left:0px;top:437px;width:33px;height:1px;background:#b4b4b4"></div>
<div style="position:absolute;left:34px;top:460px;width:1095px;height:1px;background:#d9d9d9"></div>
<div style="position:absolute;left:0px;top:460px;width:33px;height:1px;background:#b4b4b4"></div>
<div style="position:absolute;left:34px;top:483px;width:1095px;height:1px;background:#d9d9d9"></div>
<div style="position:absolute;left:0px;top:483px;width:33px;height:1px;background:#b4b4b4"></div>
<div style="position:absolute;left:34px;top:506px;width:1095px;height:1px;background:#d9d9d9"></div>
<div style="position:absolute;left:0px;top:506px;width:33px;height:1px;background:#b4b4b4"></div>
<div style="position:absolute;left:34px;top:529px;width:1095px;height:1px;background:#d9d9d9"></div>
<div style="position:absolute;left:0px;top:529px;width:33px;height:1px;background:#b4b4b4"></div>
<div style="position:absolute;left:34px;top:552px;width:1095px;height:1px;background:#d9d9d9"></div>
<div style="position:absolute;left:0px;top:552px;width:33px;height:1px;background:#b4b4b4"></div>
<div style="position:absolute;left:34px;top:575px;width:1095px;height:1px;background:#d9d9d9"></div>
<div style="position:absolute;left:0px;top:575px;width:33px;height:1px;background:#b4b4b4"></div>
<div style="position:absolute;left:34px;top:598px;width:1095px;height:1px;background:#d9d9d9"></div>
<div style="position:absolute;left:0px;top:598px;width:33px;height:1px;background:#b4b4b4"></div>
<div style="position:absolute;left:34px;top:621px;width:1095px;height:1px;background:#d9d9d9"></div>
<div style="position:absolute;left:0px;top:621px;width:33px;height:1px;background:#b4b4b4"></div>
<div style="position:absolute;left:34px;top:644px;width:1095px;height:1px;background:#d9d9d9"></div>
<div style="position:absolute;left:0px;top:644px;width:33px;height:1px;background:#b4b4b4"></div>
<div style="position:absolute;left:34px;top:667px;width:1095px;height:1px;background:#d9d9d9"></div>
<div style="position:absolute;left:0px;top:667px;width:33px;height:1px;background:#b4b4b4"></div>
<div style="position:absolute;left:34px;top:690px;width:1095px;height:1px;background:#d9d9d9"></div>
<div style="position:absolute;left:0px;top:690px;width:33px;height:1px;background:#b4b4b4"></div>
<div style="position:absolute;left:34px;top:713px;width:1095px;height:1px;background:#d9d9d9"></div>
<div style="position:absolute;left:0px;top:713px;width:33px;height:1px;background:#b4b4b4"></div>
<div style="position:absolute;left:34px;top:736px;width:1095px;height:1px;background:#d9d9d9"></div>
<div style="position:absolute;left:0px;top:736px;width:33px;height:1px;background:#b4b4b4"></div>
<div style="position:absolute;left:34px;top:759px;width:1095px;height:1px;background:#d9d9d9"></div>
<div style="position:absolute;left:0px;top:759px;width:33px;height:1px;background:#b4b4b4"></div>
<div style="position:absolute;left:34px;top:782px;width:1095px;height:1px;background:#d9d9d9"></div>
<div style="position:absolute;left:0px;top:782px;width:33px;height:1px;background:#b4b4b4"></div>
<div style="position:absolute;left:34px;top:805px;width:1095px;height:1px;background:#d9d9d9"></div>
<div style="position:absolute;left:0px;top:805px;width:33px;height:1px;background:#b4b4b4"></div>
<div style="position:absolute;left:34px;top:828px;width:1095px;height:1px;background:#d9d9d9"></div>
<div style="position:absolute;left:0px;top:828px;width:33px;height:1px;background:#b4b4b4"></div>
<div style="position:absolute;left:34px;top:851px;width:1095px;height:1px;background:#d9d9d9"></div>
<div style="position:absolute;left:0px;top:851px;width:33px;height:1px;background:#b4b4b4"></div>
<div style="position:absolute;left:34px;top:874px;width:1095px;height:1px;background:#d9d9d9"></div>
<div style="position:absolute;left:0px;top:874px;width:33px;height:1px;background:#b4b4b4"></div>
<div style="position:absolute;left:34px;top:897px;width:1095px;height:1px;background:#d9d9d9"></div>
<div style="position:absolute;left:0px;top:897px;width:33px;height:1px;background:#b4b4b4"></div>
<div style="position:absolute;left:34px;top:920px;width:1095px;height:1px;background:#d9d9d9"></div>
<div style="position:absolute;left:0px;top:920px;width:33px;height:1px;background:#b4b4b4"></div>
<div style="position:absolute;left:34px;top:943px;width:1095px;height:1px;background:#d9d9d9"></div>
<div style="position:absolute;left:0px;top:943px;width:33px;height:1px;background:#b4b4b4"></div>
<div style="position:absolute;left:34px;top:966px;width:1095px;height:1px;background:#d9d9d9"></div>
<div style="position:absolute;left:0px;top:966px;width:33px;height:1px;background:#b4b4b4"></div>
<svg style="position:absolute;left:14px;top:257px;" width="18" height="17" viewBox="0 0 18 17"><polygon points="2,16 16,2 16,16" fill="#bcbcbc"/></svg>
<div style="position:absolute;left:-127.0px;width:400px;text-align:center;top:254.5px;height:25px;line-height:25px;font-size:18px;color:#222;white-space:nowrap;">A</div>
<div style="position:absolute;left:61.0px;width:400px;text-align:center;top:254.5px;height:25px;line-height:25px;font-size:18px;color:#222;white-space:nowrap;">B</div>
<div style="position:absolute;left:271.0px;width:400px;text-align:center;top:254.5px;height:25px;line-height:25px;font-size:18px;color:#222;white-space:nowrap;">C</div>
<div style="position:absolute;left:386.5px;width:400px;text-align:center;top:254.5px;height:25px;line-height:25px;font-size:18px;color:#222;white-space:nowrap;">D</div>
<div style="position:absolute;left:480.0px;width:400px;text-align:center;top:254.5px;height:25px;line-height:25px;font-size:18px;color:#222;white-space:nowrap;">E</div>
<div style="position:absolute;left:560.0px;width:400px;text-align:center;top:254.5px;height:25px;line-height:25px;font-size:18px;color:#222;white-space:nowrap;">F</div>
<div style="position:absolute;left:640.0px;width:400px;text-align:center;top:254.5px;height:25px;line-height:25px;font-size:18px;color:#222;white-space:nowrap;">G</div>
<div style="position:absolute;left:720.0px;width:400px;text-align:center;top:254.5px;height:25px;line-height:25px;font-size:18px;color:#222;white-space:nowrap;">H</div>
<div style="position:absolute;left:800.0px;width:400px;text-align:center;top:254.5px;height:25px;line-height:25px;font-size:18px;color:#222;white-space:nowrap;">I</div>
<div style="position:absolute;left:880.0px;width:400px;text-align:center;top:254.5px;height:25px;line-height:25px;font-size:18px;color:#222;white-space:nowrap;">J</div>
<div style="position:absolute;left:0px;top:484px;width:32px;height:22px;background:#d2d2d2"></div>
<div style="position:absolute;left:32px;top:483px;width:2px;height:24px;background:#217346"></div>
<div style="position:absolute;left:-183.5px;width:400px;text-align:center;top:278.0px;height:25px;line-height:25px;font-size:18px;color:#222;white-space:nowrap;transform:scaleX(0.9);transform-origin:200px 0">1</div>
<div style="position:absolute;left:-183.5px;width:400px;text-align:center;top:301.0px;height:25px;line-height:25px;font-size:18px;color:#222;white-space:nowrap;transform:scaleX(0.9);transform-origin:200px 0">2</div>
<div style="position:absolute;left:-183.5px;width:400px;text-align:center;top:324.0px;height:25px;line-height:25px;font-size:18px;color:#222;white-space:nowrap;transform:scaleX(0.9);transform-origin:200px 0">3</div>
<div style="position:absolute;left:-183.5px;width:400px;text-align:center;top:347.0px;height:25px;line-height:25px;font-size:18px;color:#222;white-space:nowrap;transform:scaleX(0.9);transform-origin:200px 0">4</div>
<div style="position:absolute;left:-183.5px;width:400px;text-align:center;top:370.0px;height:25px;line-height:25px;font-size:18px;color:#222;white-space:nowrap;transform:scaleX(0.9);transform-origin:200px 0">5</div>
<div style="position:absolute;left:-183.5px;width:400px;text-align:center;top:393.0px;height:25px;line-height:25px;font-size:18px;color:#222;white-space:nowrap;transform:scaleX(0.9);transform-origin:200px 0">6</div>
<div style="position:absolute;left:-183.5px;width:400px;text-align:center;top:416.0px;height:25px;line-height:25px;font-size:18px;color:#222;white-space:nowrap;transform:scaleX(0.9);transform-origin:200px 0">7</div>
<div style="position:absolute;left:-183.5px;width:400px;text-align:center;top:439.0px;height:25px;line-height:25px;font-size:18px;color:#222;white-space:nowrap;transform:scaleX(0.9);transform-origin:200px 0">8</div>
<div style="position:absolute;left:-183.5px;width:400px;text-align:center;top:462.0px;height:25px;line-height:25px;font-size:18px;color:#222;white-space:nowrap;transform:scaleX(0.9);transform-origin:200px 0">9</div>
<div style="position:absolute;left:-183.5px;width:400px;text-align:center;top:485.0px;height:25px;line-height:25px;font-size:18px;color:#3a6b4e;white-space:nowrap;transform:scaleX(0.9);transform-origin:200px 0">10</div>
<div style="position:absolute;left:-183.5px;width:400px;text-align:center;top:508.0px;height:25px;line-height:25px;font-size:18px;color:#222;white-space:nowrap;transform:scaleX(0.9);transform-origin:200px 0">11</div>
<div style="position:absolute;left:-183.5px;width:400px;text-align:center;top:531.0px;height:25px;line-height:25px;font-size:18px;color:#222;white-space:nowrap;transform:scaleX(0.9);transform-origin:200px 0">12</div>
<div style="position:absolute;left:-183.5px;width:400px;text-align:center;top:554.0px;height:25px;line-height:25px;font-size:18px;color:#222;white-space:nowrap;transform:scaleX(0.9);transform-origin:200px 0">13</div>
<div style="position:absolute;left:-183.5px;width:400px;text-align:center;top:577.0px;height:25px;line-height:25px;font-size:18px;color:#222;white-space:nowrap;transform:scaleX(0.9);transform-origin:200px 0">14</div>
<div style="position:absolute;left:-183.5px;width:400px;text-align:center;top:600.0px;height:25px;line-height:25px;font-size:18px;color:#222;white-space:nowrap;transform:scaleX(0.9);transform-origin:200px 0">15</div>
<div style="position:absolute;left:-183.5px;width:400px;text-align:center;top:623.0px;height:25px;line-height:25px;font-size:18px;color:#222;white-space:nowrap;transform:scaleX(0.9);transform-origin:200px 0">16</div>
<div style="position:absolute;left:-183.5px;width:400px;text-align:center;top:646.0px;height:25px;line-height:25px;font-size:18px;color:#222;white-space:nowrap;transform:scaleX(0.9);transform-origin:200px 0">17</div>
<div style="position:absolute;left:-183.5px;width:400px;text-align:center;top:669.0px;height:25px;line-height:25px;font-size:18px;color:#222;white-space:nowrap;transform:scaleX(0.9);transform-origin:200px 0">18</div>
<div style="position:absolute;left:-183.5px;width:400px;text-align:center;top:692.0px;height:25px;line-height:25px;font-size:18px;color:#222;white-space:nowrap;transform:scaleX(0.9);transform-origin:200px 0">19</div>
<div style="position:absolute;left:-183.5px;width:400px;text-align:center;top:715.0px;height:25px;line-height:25px;font-size:18px;color:#222;white-space:nowrap;transform:scaleX(0.9);transform-origin:200px 0">20</div>
<div style="position:absolute;left:-183.5px;width:400px;text-align:center;top:738.0px;height:25px;line-height:25px;font-size:18px;color:#222;white-space:nowrap;transform:scaleX(0.9);transform-origin:200px 0">21</div>
<div style="position:absolute;left:-183.5px;width:400px;text-align:center;top:761.0px;height:25px;line-height:25px;font-size:18px;color:#222;white-space:nowrap;transform:scaleX(0.9);transform-origin:200px 0">22</div>
<div style="position:absolute;left:-183.5px;width:400px;text-align:center;top:784.0px;height:25px;line-height:25px;font-size:18px;color:#222;white-space:nowrap;transform:scaleX(0.9);transform-origin:200px 0">23</div>
<div style="position:absolute;left:-183.5px;width:400px;text-align:center;top:807.0px;height:25px;line-height:25px;font-size:18px;color:#222;white-space:nowrap;transform:scaleX(0.9);transform-origin:200px 0">24</div>
<div style="position:absolute;left:-183.5px;width:400px;text-align:center;top:830.0px;height:25px;line-height:25px;font-size:18px;color:#222;white-space:nowrap;transform:scaleX(0.9);transform-origin:200px 0">25</div>
<div style="position:absolute;left:-183.5px;width:400px;text-align:center;top:853.0px;height:25px;line-height:25px;font-size:18px;color:#222;white-space:nowrap;transform:scaleX(0.9);transform-origin:200px 0">26</div>
<div style="position:absolute;left:-183.5px;width:400px;text-align:center;top:876.0px;height:25px;line-height:25px;font-size:18px;color:#222;white-space:nowrap;transform:scaleX(0.9);transform-origin:200px 0">27</div>
<div style="position:absolute;left:-183.5px;width:400px;text-align:center;top:899.0px;height:25px;line-height:25px;font-size:18px;color:#222;white-space:nowrap;transform:scaleX(0.9);transform-origin:200px 0">28</div>
<div style="position:absolute;left:-183.5px;width:400px;text-align:center;top:922.0px;height:25px;line-height:25px;font-size:18px;color:#222;white-space:nowrap;transform:scaleX(0.9);transform-origin:200px 0">29</div>
<div style="position:absolute;left:-183.5px;width:400px;text-align:center;top:945.0px;height:25px;line-height:25px;font-size:18px;color:#222;white-space:nowrap;transform:scaleX(0.9);transform-origin:200px 0">30</div>
<div style="position:absolute;left:37px;top:279.5px;width:76px;height:22px;line-height:22px;color:#000;white-space:nowrap;overflow:hidden"><span style="display:inline-block;font-size:18.5px;transform:scaleX(0.87);transform-origin:0 0;margin-right:-5.61px">stkcd</span></div>
<div style="position:absolute;left:117px;top:279.5px;width:292px;height:22px;line-height:22px;color:#000;white-space:nowrap;overflow:hidden"><span style="display:inline-block;font-size:18.5px;transform:scaleX(0.87);transform-origin:0 0;margin-right:-17.78px">RegisterAddress</span></div>
<div style="position:absolute;left:413px;top:279.5px;width:120px;height:22px;line-height:22px;color:#000;white-space:nowrap;overflow:hidden"><span style="display:inline-block;font-size:18.5px;transform:scaleX(0.83);transform-origin:0 0;margin-right:-16.43px">PROVINCE</span></div>
<div style="position:absolute;left:537px;top:279.5px;width:103px;height:22px;line-height:22px;color:#000;white-space:nowrap;overflow:hidden"><span style="display:inline-block;font-size:18.5px;transform:scaleX(0.83);transform-origin:0 0;margin-right:-7.16px">CITY</span></div>
<div style="position:absolute;left:37px;top:302.5px;width:76px;height:22px;line-height:22px;color:#000;white-space:nowrap;overflow:hidden"><span style="display:inline-block;font-size:18.5px;transform:scaleX(0.87);transform-origin:0 0;margin-right:-8.03px">000001</span></div>
<div style="position:absolute;left:117px;top:302.5px;width:292px;height:22px;line-height:22px;color:#000;white-space:nowrap;overflow:hidden"><span style="font-size:17.5px">中国广东省深圳市罗湖区深南东路</span><span style="display:inline-block;font-size:18.5px;transform:scaleX(0.87);transform-origin:0 0;margin-right:-4.01px">178</span><span style="font-size:17.5px">号</span></div>
<div style="position:absolute;left:413px;top:302.5px;width:120px;height:22px;line-height:22px;color:#000;white-space:nowrap;overflow:hidden"><span style="font-size:17.5px">广东省</span></div>
<div style="position:absolute;left:537px;top:302.5px;width:103px;height:22px;line-height:22px;color:#000;white-space:nowrap;overflow:hidden"><span style="font-size:17.5px">深圳市</span></div>
<svg style="position:absolute;left:34px;top:300px;" width="8" height="8" viewBox="0 0 8 8"><polygon points="0,0 7,0 0,7" fill="#158a15"/></svg>
<div style="position:absolute;left:37px;top:325.5px;width:76px;height:22px;line-height:22px;color:#000;white-space:nowrap;overflow:hidden"><span style="display:inline-block;font-size:18.5px;transform:scaleX(0.87);transform-origin:0 0;margin-right:-8.03px">000002</span></div>
<div style="position:absolute;left:117px;top:325.5px;width:292px;height:22px;line-height:22px;color:#000;white-space:nowrap;overflow:hidden"><span style="font-size:17.5px">中国深圳市罗湖区水贝</span><span style="display:inline-block;font-size:18.5px;transform:scaleX(0.87);transform-origin:0 0;margin-right:-1.34px">2</span><span style="font-size:17.5px">路</span><span style="display:inline-block;font-size:18.5px;transform:scaleX(0.87);transform-origin:0 0;margin-right:-2.68px">27</span><span style="font-size:17.5px">号</span></div>
<div style="position:absolute;left:413px;top:325.5px;width:120px;height:22px;line-height:22px;color:#000;white-space:nowrap;overflow:hidden"><span style="font-size:17.5px">广东省</span></div>
<div style="position:absolute;left:537px;top:325.5px;width:103px;height:22px;line-height:22px;color:#000;white-space:nowrap;overflow:hidden"><span style="font-size:17.5px">深圳市</span></div>
<svg style="position:absolute;left:34px;top:323px;" width="8" height="8" viewBox="0 0 8 8"><polygon points="0,0 7,0 0,7" fill="#158a15"/></svg>
<div style="position:absolute;left:37px;top:348.5px;width:76px;height:22px;line-height:22px;color:#000;white-space:nowrap;overflow:hidden"><span style="display:inline-block;font-size:18.5px;transform:scaleX(0.87);transform-origin:0 0;margin-right:-8.03px">000003</span></div>
<div style="position:absolute;left:117px;top:348.5px;width:292px;height:22px;line-height:22px;color:#000;white-space:nowrap;overflow:hidden"><span style="font-size:17.5px">广东省深圳市和平路</span><span style="display:inline-block;font-size:18.5px;transform:scaleX(0.87);transform-origin:0 0;margin-right:-5.17px">1199</span><span style="font-size:17.5px">号金田大厦</span><span style="display:inline-block;font-size:18.5px;transform:scaleX(0.87);transform-origin:0 0;margin-right:-2.68px">24</span><span style="font-size:17.5px">层</span></div>
<div style="position:absolute;left:413px;top:348.5px;width:120px;height:22px;line-height:22px;color:#000;white-space:nowrap;overflow:hidden"><span style="font-size:17.5px">广东省</span></div>
<div style="position:absolute;left:537px;top:348.5px;width:103px;height:22px;line-height:22px;color:#000;white-space:nowrap;overflow:hidden"><span style="font-size:17.5px">深圳市</span></div>
<svg style="position:absolute;left:34px;top:346px;" width="8" height="8" viewBox="0 0 8 8"><polygon points="0,0 7,0 0,7" fill="#158a15"/></svg>
<div style="position:absolute;left:37px;top:371.5px;width:76px;height:22px;line-height:22px;color:#000;white-space:nowrap;overflow:hidden"><span style="display:inline-block;font-size:18.5px;transform:scaleX(0.87);transform-origin:0 0;margin-right:-8.03px">000004</span></div>
<div style="position:absolute;left:117px;top:371.5px;width:292px;height:22px;line-height:22px;color:#000;white-space:nowrap;overflow:hidden"><span style="font-size:17.5px">深圳市南山区蛇口公园路</span><span style="display:inline-block;font-size:18.5px;transform:scaleX(0.87);transform-origin:0 0;margin-right:-1.34px">4</span><span style="font-size:17.5px">号青少年活动中心</span></div>
<div style="position:absolute;left:413px;top:371.5px;width:120px;height:22px;line-height:22px;color:#000;white-space:nowrap;overflow:hidden"><span style="font-size:17.5px">广东省</span></div>
<div style="position:absolute;left:537px;top:371.5px;width:103px;height:22px;line-height:22px;color:#000;white-space:nowrap;overflow:hidden"><span style="font-size:17.5px">深圳市</span></div>
<svg style="position:absolute;left:34px;top:369px;" width="8" height="8" viewBox="0 0 8 8"><polygon points="0,0 7,0 0,7" fill="#158a15"/></svg>
<div style="position:absolute;left:37px;top:394.5px;width:76px;height:22px;line-height:22px;color:#000;white-space:nowrap;overflow:hidden"><span style="display:inline-block;font-size:18.5px;transform:scaleX(0.87);transform-origin:0 0;margin-right:-8.03px">000005</span></div>
<div style="position:absolute;left:117px;top:394.5px;width:292px;height:22px;line-height:22px;color:#000;white-space:nowrap;overflow:hidden"><span style="font-size:17.5px">深圳市人民南路发展中心大厦</span><span style="display:inline-block;font-size:18.5px;transform:scaleX(0.87);transform-origin:0 0;margin-right:-2.68px">13</span><span style="font-size:17.5px">楼</span></div>
<div style="position:absolute;left:413px;top:394.5px;width:120px;height:22px;line-height:22px;color:#000;white-space:nowrap;overflow:hidden"><span style="font-size:17.5px">广东省</span></div>
<div style="position:absolute;left:537px;top:394.5px;width:103px;height:22px;line-height:22px;color:#000;white-space:nowrap;overflow:hidden"><span style="font-size:17.5px">深圳市</span></div>
<svg style="position:absolute;left:34px;top:392px;" width="8" height="8" viewBox="0 0 8 8"><polygon points="0,0 7,0 0,7" fill="#158a15"/></svg>
<div style="position:absolute;left:37px;top:417.5px;width:76px;height:22px;line-height:22px;color:#000;white-space:nowrap;overflow:hidden"><span style="display:inline-block;font-size:18.5px;transform:scaleX(0.87);transform-origin:0 0;margin-right:-8.03px">000006</span></div>
<div style="position:absolute;left:117px;top:417.5px;width:292px;height:22px;line-height:22px;color:#000;white-space:nowrap;overflow:hidden"><span style="font-size:17.5px">深圳市宝安南路振业大厦</span><span style="display:inline-block;font-size:18.5px;transform:scaleX(0.87);transform-origin:0 0;margin-right:-2.68px">29</span><span style="font-size:17.5px">—</span><span style="display:inline-block;font-size:18.5px;transform:scaleX(0.87);transform-origin:0 0;margin-right:-2.68px">32</span><span style="font-size:17.5px">层</span></div>
<div style="position:absolute;left:413px;top:417.5px;width:120px;height:22px;line-height:22px;color:#000;white-space:nowrap;overflow:hidden"><span style="font-size:17.5px">广东省</span></div>
<div style="position:absolute;left:537px;top:417.5px;width:103px;height:22px;line-height:22px;color:#000;white-space:nowrap;overflow:hidden"><span style="font-size:17.5px">深圳市</span></div>
<svg style="position:absolute;left:34px;top:415px;" width="8" height="8" viewBox="0 0 8 8"><polygon points="0,0 7,0 0,7" fill="#158a15"/></svg>
<div style="position:absolute;left:37px;top:440.5px;width:76px;height:22px;line-height:22px;color:#000;white-space:nowrap;overflow:hidden"><span style="display:inline-block;font-size:18.5px;transform:scaleX(0.87);transform-origin:0 0;margin-right:-8.03px">000007</span></div>
<div style="position:absolute;left:117px;top:440.5px;width:292px;height:22px;line-height:22px;color:#000;white-space:nowrap;overflow:hidden"><span style="font-size:17.5px">深圳市华强北路赛格工业大厦五楼</span></div>
<div style="position:absolute;left:413px;top:440.5px;width:120px;height:22px;line-height:22px;color:#000;white-space:nowrap;overflow:hidden"><span style="font-size:17.5px">广东省</span></div>
<div style="position:absolute;left:537px;top:440.5px;width:103px;height:22px;line-height:22px;color:#000;white-space:nowrap;overflow:hidden"><span style="font-size:17.5px">深圳市</span></div>
<svg style="position:absolute;left:34px;top:438px;" width="8" height="8" viewBox="0 0 8 8"><polygon points="0,0 7,0 0,7" fill="#158a15"/></svg>
<div style="position:absolute;left:37px;top:463.5px;width:76px;height:22px;line-height:22px;color:#000;white-space:nowrap;overflow:hidden"><span style="display:inline-block;font-size:18.5px;transform:scaleX(0.87);transform-origin:0 0;margin-right:-8.03px">000008</span></div>
<div style="position:absolute;left:117px;top:463.5px;width:292px;height:22px;line-height:22px;color:#000;white-space:nowrap;overflow:hidden"><span style="font-size:17.5px">深圳市罗湖区人民南路深房广场</span><span style="display:inline-block;font-size:18.5px;transform:scaleX(0.83);transform-origin:0 0;margin-right:-2.10px">A</span><span style="font-size:17.5px">座</span><span style="display:inline-block;font-size:18.5px;transform:scaleX(0.87);transform-origin:0 0;margin-right:-2.68px">18</span><span style="font-size:17.5px">层</span></div>
<div style="position:absolute;left:413px;top:463.5px;width:120px;height:22px;line-height:22px;color:#000;white-space:nowrap;overflow:hidden"><span style="font-size:17.5px">广东省</span></div>
<div style="position:absolute;left:537px;top:463.5px;width:103px;height:22px;line-height:22px;color:#000;white-space:nowrap;overflow:hidden"><span style="font-size:17.5px">深圳市</span></div>
<svg style="position:absolute;left:34px;top:461px;" width="8" height="8" viewBox="0 0 8 8"><polygon points="0,0 7,0 0,7" fill="#158a15"/></svg>
<div style="position:absolute;left:37px;top:486.5px;width:76px;height:22px;line-height:22px;color:#000;white-space:nowrap;overflow:hidden"><span style="display:inline-block;font-size:18.5px;transform:scaleX(0.87);transform-origin:0 0;margin-right:-8.03px">000009</span></div>
<div style="position:absolute;left:117px;top:486.5px;width:292px;height:22px;line-height:22px;color:#000;white-space:nowrap;overflow:hidden"><span style="font-size:17.5px">深圳市笋岗东路宝安广场</span><span style="display:inline-block;font-size:18.5px;transform:scaleX(0.83);transform-origin:0 0;margin-right:-2.10px">A</span><span style="font-size:17.5px">座</span><span style="display:inline-block;font-size:18.5px;transform:scaleX(0.87);transform-origin:0 0;margin-right:-6.15px">28-29</span><span style="font-size:17.5px">层</span></div>
<div style="position:absolute;left:413px;top:486.5px;width:120px;height:22px;line-height:22px;color:#000;white-space:nowrap;overflow:hidden"><span style="font-size:17.5px">广东省</span></div>
<div style="position:absolute;left:537px;top:486.5px;width:103px;height:22px;line-height:22px;color:#000;white-space:nowrap;overflow:hidden"><span style="font-size:17.5px">深圳市</span></div>
<svg style="position:absolute;left:34px;top:484px;" width="8" height="8" viewBox="0 0 8 8"><polygon points="0,0 7,0 0,7" fill="#158a15"/></svg>
<div style="position:absolute;left:37px;top:509.5px;width:76px;height:22px;line-height:22px;color:#000;white-space:nowrap;overflow:hidden"><span style="display:inline-block;font-size:18.5px;transform:scaleX(0.87);transform-origin:0 0;margin-right:-8.03px">000010</span></div>
<div style="position:absolute;left:117px;top:509.5px;width:292px;height:22px;line-height:22px;color:#000;white-space:nowrap;overflow:hidden"><span style="font-size:17.5px">深圳市福田区深南中路华联大厦</span><span style="display:inline-block;font-size:18.5px;transform:scaleX(0.87);transform-origin:0 0;margin-right:-2.68px">10</span><span style="font-size:17.5px">楼</span></div>
<div style="position:absolute;left:413px;top:509.5px;width:120px;height:22px;line-height:22px;color:#000;white-space:nowrap;overflow:hidden"><span style="font-size:17.5px">广东省</span></div>
<div style="position:absolute;left:537px;top:509.5px;width:103px;height:22px;line-height:22px;color:#000;white-space:nowrap;overflow:hidden"><span style="font-size:17.5px">深圳市</span></div>
<svg style="position:absolute;left:34px;top:507px;" width="8" height="8" viewBox="0 0 8 8"><polygon points="0,0 7,0 0,7" fill="#158a15"/></svg>
<div style="position:absolute;left:37px;top:532.5px;width:76px;height:22px;line-height:22px;color:#000;white-space:nowrap;overflow:hidden"><span style="display:inline-block;font-size:18.5px;transform:scaleX(0.87);transform-origin:0 0;margin-right:-7.85px">000011</span></div>
<div style="position:absolute;left:117px;top:532.5px;width:292px;height:22px;line-height:22px;color:#000;white-space:nowrap;overflow:hidden"><span style="font-size:17.5px">深圳市人民南路国贸大厦</span><span style="display:inline-block;font-size:18.5px;transform:scaleX(0.87);transform-origin:0 0;margin-right:-2.68px">39</span><span style="font-size:17.5px">层</span><span style="display:inline-block;font-size:18.5px;transform:scaleX(0.87);transform-origin:0 0;margin-right:-2.68px">42</span><span style="font-size:17.5px">层</span></div>
<div style="position:absolute;left:413px;top:532.5px;width:120px;height:22px;line-height:22px;color:#000;white-space:nowrap;overflow:hidden"><span style="font-size:17.5px">广东省</span></div>
<div style="position:absolute;left:537px;top:532.5px;width:103px;height:22px;line-height:22px;color:#000;white-space:nowrap;overflow:hidden"><span style="font-size:17.5px">深圳市</span></div>
<svg style="position:absolute;left:34px;top:530px;" width="8" height="8" viewBox="0 0 8 8"><polygon points="0,0 7,0 0,7" fill="#158a15"/></svg>
<div style="position:absolute;left:37px;top:555.5px;width:76px;height:22px;line-height:22px;color:#000;white-space:nowrap;overflow:hidden"><span style="display:inline-block;font-size:18.5px;transform:scaleX(0.87);transform-origin:0 0;margin-right:-8.03px">000012</span></div>
<div style="position:absolute;left:117px;top:555.5px;width:292px;height:22px;line-height:22px;color:#000;white-space:nowrap;overflow:hidden"><span style="font-size:17.5px">中国深圳蛇口工业六路一号南玻大厦</span></div>
<div style="position:absolute;left:413px;top:555.5px;width:120px;height:22px;line-height:22px;color:#000;white-space:nowrap;overflow:hidden"><span style="font-size:17.5px">广东省</span></div>
<div style="position:absolute;left:537px;top:555.5px;width:103px;height:22px;line-height:22px;color:#000;white-space:nowrap;overflow:hidden"><span style="font-size:17.5px">深圳市</span></div>
<svg style="position:absolute;left:34px;top:553px;" width="8" height="8" viewBox="0 0 8 8"><polygon points="0,0 7,0 0,7" fill="#158a15"/></svg>
<div style="position:absolute;left:37px;top:578.5px;width:76px;height:22px;line-height:22px;color:#000;white-space:nowrap;overflow:hidden"><span style="display:inline-block;font-size:18.5px;transform:scaleX(0.87);transform-origin:0 0;margin-right:-8.03px">000013</span></div>
<div style="position:absolute;left:117px;top:578.5px;width:292px;height:22px;line-height:22px;color:#000;white-space:nowrap;overflow:hidden"><span style="font-size:17.5px">深圳市福田区红荔西路石化大厦</span></div>
<div style="position:absolute;left:413px;top:578.5px;width:120px;height:22px;line-height:22px;color:#000;white-space:nowrap;overflow:hidden"><span style="font-size:17.5px">广东省</span></div>
<div style="position:absolute;left:537px;top:578.5px;width:103px;height:22px;line-height:22px;color:#000;white-space:nowrap;overflow:hidden"><span style="font-size:17.5px">深圳市</span></div>
<svg style="position:absolute;left:34px;top:576px;" width="8" height="8" viewBox="0 0 8 8"><polygon points="0,0 7,0 0,7" fill="#158a15"/></svg>
<div style="position:absolute;left:37px;top:601.5px;width:76px;height:22px;line-height:22px;color:#000;white-space:nowrap;overflow:hidden"><span style="display:inline-block;font-size:18.5px;transform:scaleX(0.87);transform-origin:0 0;margin-right:-8.03px">000014</span></div>
<div style="position:absolute;left:117px;top:601.5px;width:292px;height:22px;line-height:22px;color:#000;white-space:nowrap;overflow:hidden"><span style="font-size:17.5px">中国深圳市沙河白石洲沙河商城七楼</span></div>
<div style="position:absolute;left:413px;top:601.5px;width:120px;height:22px;line-height:22px;color:#000;white-space:nowrap;overflow:hidden"><span style="font-size:17.5px">广东省</span></div>
<div style="position:absolute;left:537px;top:601.5px;width:103px;height:22px;line-height:22px;color:#000;white-space:nowrap;overflow:hidden"><span style="font-size:17.5px">深圳市</span></div>
<svg style="position:absolute;left:34px;top:599px;" width="8" height="8" viewBox="0 0 8 8"><polygon points="0,0 7,0 0,7" fill="#158a15"/></svg>
<div style="position:absolute;left:37px;top:624.5px;width:76px;height:22px;line-height:22px;color:#000;white-space:nowrap;overflow:hidden"><span style="display:inline-block;font-size:18.5px;transform:scaleX(0.87);transform-origin:0 0;margin-right:-8.03px">000015</span></div>
<div style="position:absolute;left:117px;top:624.5px;width:292px;height:22px;line-height:22px;color:#000;white-space:nowrap;overflow:hidden"><span style="font-size:17.5px">深圳市福田区八卦岭工业区八卦四路中</span></div>
<div style="position:absolute;left:413px;top:624.5px;width:120px;height:22px;line-height:22px;color:#000;white-space:nowrap;overflow:hidden"><span style="font-size:17.5px">广东省</span></div>
<div style="position:absolute;left:537px;top:624.5px;width:103px;height:22px;line-height:22px;color:#000;white-space:nowrap;overflow:hidden"><span style="font-size:17.5px">深圳市</span></div>
<svg style="position:absolute;left:34px;top:622px;" width="8" height="8" viewBox="0 0 8 8"><polygon points="0,0 7,0 0,7" fill="#158a15"/></svg>
<div style="position:absolute;left:37px;top:647.5px;width:76px;height:22px;line-height:22px;color:#000;white-space:nowrap;overflow:hidden"><span style="display:inline-block;font-size:18.5px;transform:scaleX(0.87);transform-origin:0 0;margin-right:-8.03px">000016</span></div>
<div style="position:absolute;left:117px;top:647.5px;width:292px;height:22px;line-height:22px;color:#000;white-space:nowrap;overflow:hidden"><span style="font-size:17.5px">深圳市华侨城东部工业区</span></div>
<div style="position:absolute;left:413px;top:647.5px;width:120px;height:22px;line-height:22px;color:#000;white-space:nowrap;overflow:hidden"><span style="font-size:17.5px">广东省</span></div>
<div style="position:absolute;left:537px;top:647.5px;width:103px;height:22px;line-height:22px;color:#000;white-space:nowrap;overflow:hidden"><span style="font-size:17.5px">深圳市</span></div>
<svg style="position:absolute;left:34px;top:645px;" width="8" height="8" viewBox="0 0 8 8"><polygon points="0,0 7,0 0,7" fill="#158a15"/></svg>
<div style="position:absolute;left:37px;top:670.5px;width:76px;height:22px;line-height:22px;color:#000;white-space:nowrap;overflow:hidden"><span style="display:inline-block;font-size:18.5px;transform:scaleX(0.87);transform-origin:0 0;margin-right:-8.03px">000017</span></div>
<div style="position:absolute;left:117px;top:670.5px;width:292px;height:22px;line-height:22px;color:#000;white-space:nowrap;overflow:hidden"><span style="font-size:17.5px">中国广东省深圳市布心路三零零八号</span></div>
<div style="position:absolute;left:413px;top:670.5px;width:120px;height:22px;line-height:22px;color:#000;white-space:nowrap;overflow:hidden"><span style="font-size:17.5px">广东省</span></div>
<div style="position:absolute;left:537px;top:670.5px;width:103px;height:22px;line-height:22px;color:#000;white-space:nowrap;overflow:hidden"><span style="font-size:17.5px">深圳市</span></div>
<svg style="position:absolute;left:34px;top:668px;" width="8" height="8" viewBox="0 0 8 8"><polygon points="0,0 7,0 0,7" fill="#158a15"/></svg>
<div style="position:absolute;left:37px;top:693.5px;width:76px;height:22px;line-height:22px;color:#000;white-space:nowrap;overflow:hidden"><span style="display:inline-block;font-size:18.5px;transform:scaleX(0.87);transform-origin:0 0;margin-right:-8.03px">000018</span></div>
<div style="position:absolute;left:117px;top:693.5px;width:292px;height:22px;line-height:22px;color:#000;white-space:nowrap;overflow:hidden"><span style="font-size:17.5px">深圳市人民南路房地产大厦</span><span style="display:inline-block;font-size:18.5px;transform:scaleX(0.87);transform-origin:0 0;margin-right:-2.68px">10</span><span style="font-size:17.5px">楼</span><span style="display:inline-block;font-size:18.5px;transform:scaleX(0.83);transform-origin:0 0;margin-right:-2.27px">C</span><span style="font-size:17.5px">座</span></div>
<div style="position:absolute;left:413px;top:693.5px;width:120px;height:22px;line-height:22px;color:#000;white-space:nowrap;overflow:hidden"><span style="font-size:17.5px">广东省</span></div>
<div style="position:absolute;left:537px;top:693.5px;width:103px;height:22px;line-height:22px;color:#000;white-space:nowrap;overflow:hidden"><span style="font-size:17.5px">深圳市</span></div>
<svg style="position:absolute;left:34px;top:691px;" width="8" height="8" viewBox="0 0 8 8"><polygon points="0,0 7,0 0,7" fill="#158a15"/></svg>
<div style="position:absolute;left:37px;top:716.5px;width:76px;height:22px;line-height:22px;color:#000;white-space:nowrap;overflow:hidden"><span style="display:inline-block;font-size:18.5px;transform:scaleX(0.87);transform-origin:0 0;margin-right:-8.03px">000019</span></div>
<div style="position:absolute;left:117px;top:716.5px;width:292px;height:22px;line-height:22px;color:#000;white-space:nowrap;overflow:hidden"><span style="font-size:17.5px">深圳市罗湖区文锦北路</span><span style="display:inline-block;font-size:18.5px;transform:scaleX(0.87);transform-origin:0 0;margin-right:-5.35px">1058</span><span style="font-size:17.5px">号</span></div>
<div style="position:absolute;left:413px;top:716.5px;width:120px;height:22px;line-height:22px;color:#000;white-space:nowrap;overflow:hidden"><span style="font-size:17.5px">广东省</span></div>
<div style="position:absolute;left:537px;top:716.5px;width:103px;height:22px;line-height:22px;color:#000;white-space:nowrap;overflow:hidden"><span style="font-size:17.5px">深圳市</span></div>
<svg style="position:absolute;left:34px;top:714px;" width="8" height="8" viewBox="0 0 8 8"><polygon points="0,0 7,0 0,7" fill="#158a15"/></svg>
<div style="position:absolute;left:37px;top:739.5px;width:76px;height:22px;line-height:22px;color:#000;white-space:nowrap;overflow:hidden"><span style="display:inline-block;font-size:18.5px;transform:scaleX(0.87);transform-origin:0 0;margin-right:-8.03px">000020</span></div>
<div style="position:absolute;left:117px;top:739.5px;width:292px;height:22px;line-height:22px;color:#000;white-space:nowrap;overflow:hidden"><span style="font-size:17.5px">深圳市福田区华发北路</span><span style="display:inline-block;font-size:18.5px;transform:scaleX(0.87);transform-origin:0 0;margin-right:-3.83px">411</span><span style="font-size:17.5px">栋</span></div>
<div style="position:absolute;left:413px;top:739.5px;width:120px;height:22px;line-height:22px;color:#000;white-space:nowrap;overflow:hidden"><span style="font-size:17.5px">广东省</span></div>
<div style="position:absolute;left:537px;top:739.5px;width:103px;height:22px;line-height:22px;color:#000;white-space:nowrap;overflow:hidden"><span style="font-size:17.5px">深圳市</span></div>
<svg style="position:absolute;left:34px;top:737px;" width="8" height="8" viewBox="0 0 8 8"><polygon points="0,0 7,0 0,7" fill="#158a15"/></svg>
<div style="position:absolute;left:37px;top:762.5px;width:76px;height:22px;line-height:22px;color:#000;white-space:nowrap;overflow:hidden"><span style="display:inline-block;font-size:18.5px;transform:scaleX(0.87);transform-origin:0 0;margin-right:-8.03px">000021</span></div>
<div style="position:absolute;left:117px;top:762.5px;width:292px;height:22px;line-height:22px;color:#000;white-space:nowrap;overflow:hidden"><span style="font-size:17.5px">深圳市福田区彩田路</span><span style="display:inline-block;font-size:18.5px;transform:scaleX(0.87);transform-origin:0 0;margin-right:-5.35px">7006</span><span style="font-size:17.5px">号</span></div>
<div style="position:absolute;left:413px;top:762.5px;width:120px;height:22px;line-height:22px;color:#000;white-space:nowrap;overflow:hidden"><span style="font-size:17.5px">广东省</span></div>
<div style="position:absolute;left:537px;top:762.5px;width:103px;height:22px;line-height:22px;color:#000;white-space:nowrap;overflow:hidden"><span style="font-size:17.5px">深圳市</span></div>
<svg style="position:absolute;left:34px;top:760px;" width="8" height="8" viewBox="0 0 8 8"><polygon points="0,0 7,0 0,7" fill="#158a15"/></svg>
<div style="position:absolute;left:37px;top:785.5px;width:76px;height:22px;line-height:22px;color:#000;white-space:nowrap;overflow:hidden"><span style="display:inline-block;font-size:18.5px;transform:scaleX(0.87);transform-origin:0 0;margin-right:-8.03px">000022</span></div>
<div style="position:absolute;left:117px;top:785.5px;width:292px;height:22px;line-height:22px;color:#000;white-space:nowrap;overflow:hidden"><span style="font-size:17.5px">中国深圳市赤湾港</span></div>
<div style="position:absolute;left:413px;top:785.5px;width:120px;height:22px;line-height:22px;color:#000;white-space:nowrap;overflow:hidden"><span style="font-size:17.5px">广东省</span></div>
<div style="position:absolute;left:537px;top:785.5px;width:103px;height:22px;line-height:22px;color:#000;white-space:nowrap;overflow:hidden"><span style="font-size:17.5px">深圳市</span></div>
<svg style="position:absolute;left:34px;top:783px;" width="8" height="8" viewBox="0 0 8 8"><polygon points="0,0 7,0 0,7" fill="#158a15"/></svg>
<div style="position:absolute;left:37px;top:808.5px;width:76px;height:22px;line-height:22px;color:#000;white-space:nowrap;overflow:hidden"><span style="display:inline-block;font-size:18.5px;transform:scaleX(0.87);transform-origin:0 0;margin-right:-8.03px">000023</span></div>
<div style="position:absolute;left:117px;top:808.5px;width:292px;height:22px;line-height:22px;color:#000;white-space:nowrap;overflow:hidden"><span style="font-size:17.5px">深圳市宝安南路天地大厦二三楼</span></div>
<div style="position:absolute;left:413px;top:808.5px;width:120px;height:22px;line-height:22px;color:#000;white-space:nowrap;overflow:hidden"><span style="font-size:17.5px">广东省</span></div>
<div style="position:absolute;left:537px;top:808.5px;width:103px;height:22px;line-height:22px;color:#000;white-space:nowrap;overflow:hidden"><span style="font-size:17.5px">深圳市</span></div>
<svg style="position:absolute;left:34px;top:806px;" width="8" height="8" viewBox="0 0 8 8"><polygon points="0,0 7,0 0,7" fill="#158a15"/></svg>
<div style="position:absolute;left:37px;top:831.5px;width:76px;height:22px;line-height:22px;color:#000;white-space:nowrap;overflow:hidden"><span style="display:inline-block;font-size:18.5px;transform:scaleX(0.87);transform-origin:0 0;margin-right:-8.03px">000024</span></div>
<div style="position:absolute;left:117px;top:831.5px;width:292px;height:22px;line-height:22px;color:#000;white-space:nowrap;overflow:hidden"><span style="font-size:17.5px">深圳南山区蛇口工业区新时代广场</span><span style="display:inline-block;font-size:18.5px;transform:scaleX(0.87);transform-origin:0 0;margin-right:-2.68px">30</span><span style="font-size:17.5px">楼</span></div>
<div style="position:absolute;left:413px;top:831.5px;width:120px;height:22px;line-height:22px;color:#000;white-space:nowrap;overflow:hidden"><span style="font-size:17.5px">广东省</span></div>
<div style="position:absolute;left:537px;top:831.5px;width:103px;height:22px;line-height:22px;color:#000;white-space:nowrap;overflow:hidden"><span style="font-size:17.5px">深圳市</span></div>
<svg style="position:absolute;left:34px;top:829px;" width="8" height="8" viewBox="0 0 8 8"><polygon points="0,0 7,0 0,7" fill="#158a15"/></svg>
<div style="position:absolute;left:37px;top:854.5px;width:76px;height:22px;line-height:22px;color:#000;white-space:nowrap;overflow:hidden"><span style="display:inline-block;font-size:18.5px;transform:scaleX(0.87);transform-origin:0 0;margin-right:-8.03px">000025</span></div>
<div style="position:absolute;left:117px;top:854.5px;width:292px;height:22px;line-height:22px;color:#000;white-space:nowrap;overflow:hidden"><span style="font-size:17.5px">深圳市罗湖区水贝二路</span><span style="display:inline-block;font-size:18.5px;transform:scaleX(0.87);transform-origin:0 0;margin-right:-2.68px">56</span><span style="font-size:17.5px">号特力大厦</span><span style="display:inline-block;font-size:18.5px;transform:scaleX(0.87);transform-origin:0 0;margin-right:-1.34px">3</span><span style="font-size:17.5px">楼</span></div>
<div style="position:absolute;left:413px;top:854.5px;width:120px;height:22px;line-height:22px;color:#000;white-space:nowrap;overflow:hidden"><span style="font-size:17.5px">广东省</span></div>
<div style="position:absolute;left:537px;top:854.5px;width:103px;height:22px;line-height:22px;color:#000;white-space:nowrap;overflow:hidden"><span style="font-size:17.5px">深圳市</span></div>
<svg style="position:absolute;left:34px;top:852px;" width="8" height="8" viewBox="0 0 8 8"><polygon points="0,0 7,0 0,7" fill="#158a15"/></svg>
<div style="position:absolute;left:37px;top:877.5px;width:76px;height:22px;line-height:22px;color:#000;white-space:nowrap;overflow:hidden"><span style="display:inline-block;font-size:18.5px;transform:scaleX(0.87);transform-origin:0 0;margin-right:-8.03px">000026</span></div>
<div style="position:absolute;left:117px;top:877.5px;width:292px;height:22px;line-height:22px;color:#000;white-space:nowrap;overflow:hidden"><span style="font-size:17.5px">深圳市振华路</span><span style="display:inline-block;font-size:18.5px;transform:scaleX(0.87);transform-origin:0 0;margin-right:-4.01px">163</span><span style="font-size:17.5px">号飞亚达大厦</span></div>
<div style="position:absolute;left:413px;top:877.5px;width:120px;height:22px;line-height:22px;color:#000;white-space:nowrap;overflow:hidden"><span style="font-size:17.5px">广东省</span></div>
<div style="position:absolute;left:537px;top:877.5px;width:103px;height:22px;line-height:22px;color:#000;white-space:nowrap;overflow:hidden"><span style="font-size:17.5px">深圳市</span></div>
<svg style="position:absolute;left:34px;top:875px;" width="8" height="8" viewBox="0 0 8 8"><polygon points="0,0 7,0 0,7" fill="#158a15"/></svg>
<div style="position:absolute;left:37px;top:900.5px;width:76px;height:22px;line-height:22px;color:#000;white-space:nowrap;overflow:hidden"><span style="display:inline-block;font-size:18.5px;transform:scaleX(0.87);transform-origin:0 0;margin-right:-8.03px">000027</span></div>
<div style="position:absolute;left:117px;top:900.5px;width:292px;height:22px;line-height:22px;color:#000;white-space:nowrap;overflow:hidden"><span style="font-size:17.5px">深圳市福田区深南中路</span><span style="display:inline-block;font-size:18.5px;transform:scaleX(0.87);transform-origin:0 0;margin-right:-5.35px">2068</span><span style="font-size:17.5px">号</span><span style="display:inline-block;font-size:18.5px;transform:scaleX(0.87);transform-origin:0 0;margin-right:-2.68px">33</span><span style="font-size:17.5px">层</span></div>
<div style="position:absolute;left:413px;top:900.5px;width:120px;height:22px;line-height:22px;color:#000;white-space:nowrap;overflow:hidden"><span style="font-size:17.5px">广东省</span></div>
<div style="position:absolute;left:537px;top:900.5px;width:103px;height:22px;line-height:22px;color:#000;white-space:nowrap;overflow:hidden"><span style="font-size:17.5px">深圳市</span></div>
<svg style="position:absolute;left:34px;top:898px;" width="8" height="8" viewBox="0 0 8 8"><polygon points="0,0 7,0 0,7" fill="#158a15"/></svg>
<div style="position:absolute;left:37px;top:923.5px;width:76px;height:22px;line-height:22px;color:#000;white-space:nowrap;overflow:hidden"><span style="display:inline-block;font-size:18.5px;transform:scaleX(0.87);transform-origin:0 0;margin-right:-8.03px">000028</span></div>
<div style="position:absolute;left:117px;top:923.5px;width:292px;height:22px;line-height:22px;color:#000;white-space:nowrap;overflow:hidden"><span style="font-size:17.5px">深圳市人民南路国际贸易中心大厦</span><span style="display:inline-block;font-size:18.5px;transform:scaleX(0.87);transform-origin:0 0;margin-right:-2.50px">11</span><span style="font-size:17.5px">楼</span></div>
<div style="position:absolute;left:413px;top:923.5px;width:120px;height:22px;line-height:22px;color:#000;white-space:nowrap;overflow:hidden"><span style="font-size:17.5px">广东省</span></div>
<div style="position:absolute;left:537px;top:923.5px;width:103px;height:22px;line-height:22px;color:#000;white-space:nowrap;overflow:hidden"><span style="font-size:17.5px">深圳市</span></div>
<svg style="position:absolute;left:34px;top:921px;" width="8" height="8" viewBox="0 0 8 8"><polygon points="0,0 7,0 0,7" fill="#158a15"/></svg>
<div style="position:absolute;left:37px;top:946.5px;width:76px;height:22px;line-height:22px;color:#000;white-space:nowrap;overflow:hidden"><span style="display:inline-block;font-size:18.5px;transform:scaleX(0.87);transform-origin:0 0;margin-right:-8.03px">000029</span></div>
<div style="position:absolute;left:117px;top:946.5px;width:292px;height:22px;line-height:22px;color:#000;white-space:nowrap;overflow:hidden"><span style="font-size:17.5px">深圳市人民南路深房广场</span><span style="display:inline-block;font-size:18.5px;transform:scaleX(0.87);transform-origin:0 0;margin-right:-2.68px">47</span><span style="font-size:17.5px">楼</span></div>
<div style="position:absolute;left:413px;top:946.5px;width:120px;height:22px;line-height:22px;color:#000;white-space:nowrap;overflow:hidden"><span style="font-size:17.5px">广东省</span></div>
<div style="position:absolute;left:537px;top:946.5px;width:103px;height:22px;line-height:22px;color:#000;white-space:nowrap;overflow:hidden"><span style="font-size:17.5px">深圳市</span></div>
<svg style="position:absolute;left:34px;top:944px;" width="8" height="8" viewBox="0 0 8 8"><polygon points="0,0 7,0 0,7" fill="#158a15"/></svg>
<svg style="position:absolute;left:34px;top:967px;" width="8" height="8" viewBox="0 0 8 8"><polygon points="0,0 7,0 0,7" fill="#158a15"/></svg>
</body></html>
